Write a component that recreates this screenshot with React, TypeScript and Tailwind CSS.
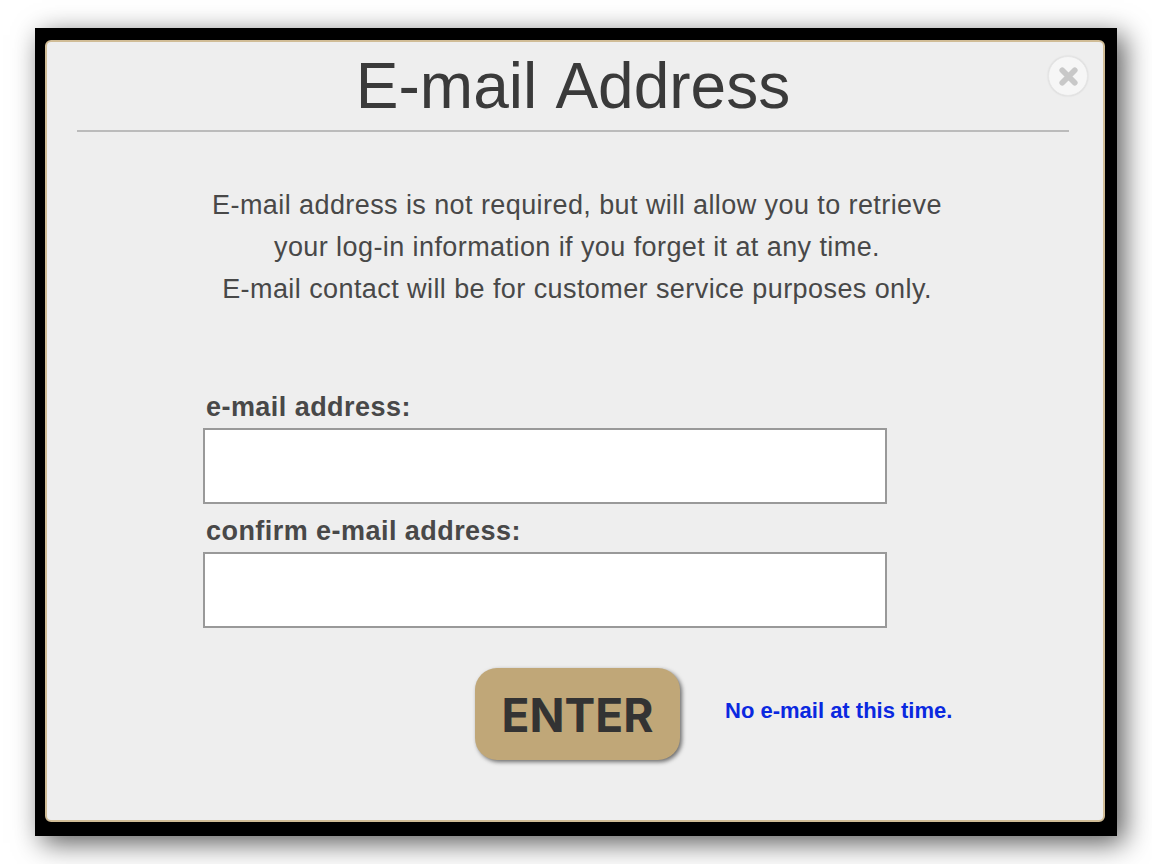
export default function App() {
  const sans = "font-['Liberation_Sans',Arial,sans-serif]";
  return (
    <div className={`h-[864px] w-[1152px] overflow-hidden bg-white pl-[35px] pt-[28px] ${sans}`}>
      <div className="h-[808px] w-[1082px] bg-black pl-[10px] pt-[12px] shadow-[7px_7px_26px_rgba(0,0,0,0.65)]">
        <div className="relative h-[782px] w-[1060px] rounded-[6px] border-2 border-[#d0bc96] bg-[#eeeeee] pl-[30px] pr-[34px] pt-[8px]">
          <h1 className="border-b-2 border-[#bbbbbb] pb-[8px] text-center text-[64px] leading-[72px] font-normal text-[#3a3a3a] [word-spacing:4px]">E-mail Address</h1>
          <div className="absolute right-[15px] top-[14px] flex h-[40px] w-[40px] items-center justify-center rounded-full border border-[#e6e6e6] bg-[#f6f6f6] shadow-[0_0_2px_rgba(0,0,0,0.12)]">
            <svg viewBox="0 0 24 24" className="h-[25px] w-[25px]">
              <path d="M6 6 L18 18 M18 6 L6 18" stroke="#c8c8c8" strokeWidth="5.5" strokeLinecap="round" />
            </svg>
          </div>
          <p className="mt-[52px] ml-[8px] text-center text-[27px] leading-[42px] tracking-[0.42px] text-[#484848]">
            E-mail address is not required, but will allow you to retrieve<br />
            your log-in information if you forget it at any time.<br />
            E-mail contact will be for customer service purposes only.
          </p>
          <div className="mt-[76px] ml-[126px] w-[684px]">
            <label className="block pl-[3px] text-[27px] leading-[42px] tracking-[0.45px] font-bold text-[#484848]">e-mail address:</label>
            <input className="block h-[76px] w-full border-2 border-[#999999] bg-white" />
            <label className="mt-[6px] block pl-[3px] text-[27px] leading-[42px] tracking-[0.45px] font-bold text-[#484848]">confirm e-mail address:</label>
            <input className="block h-[76px] w-full border-2 border-[#999999] bg-white" />
          </div>
          <div className="mt-[40px] ml-[398px] flex items-center">
            <button className="h-[92px] w-[205px] rounded-[22px] bg-[#c0a778] pt-[3px] text-[46px] font-bold text-[#333333] shadow-[2px_2px_4px_rgba(0,0,0,0.55)] font-['Inter',sans-serif]">ENTER</button>
            <a className="mb-[8px] ml-[45px] text-[22px] font-bold text-[#0a28e0]">No e-mail at this time.</a>
          </div>
        </div>
      </div>
    </div>
  );
}
